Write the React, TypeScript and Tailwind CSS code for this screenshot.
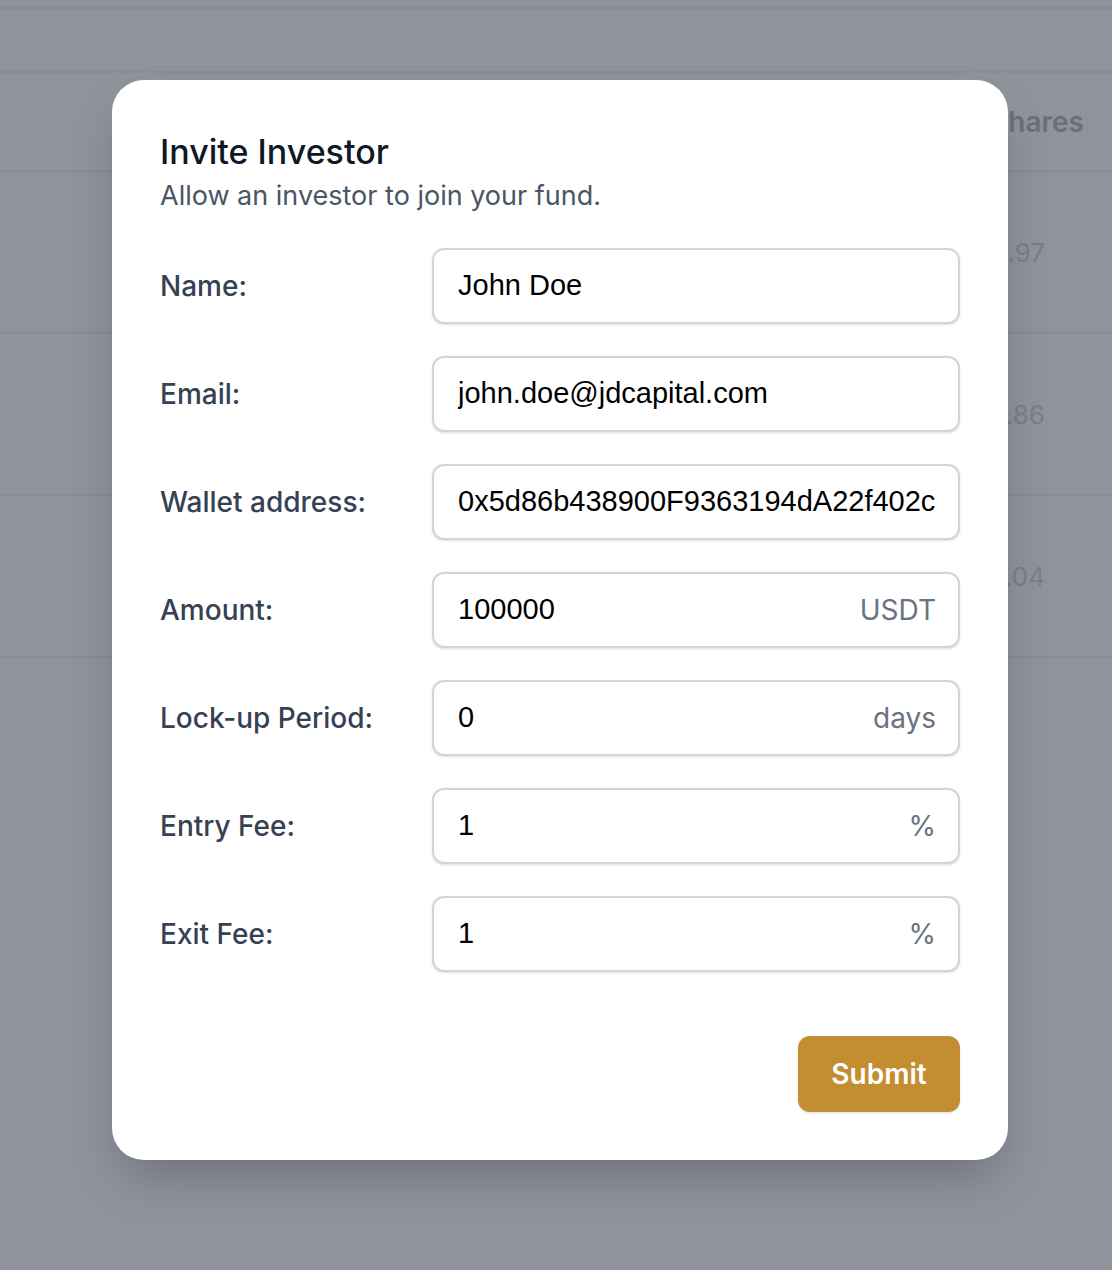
import React from "react";

type Field = {
    label: string;
    value: string;
    suffix?: string;
};

const fields: Field[] = [
    { label: "Name:", value: "John Doe" },
    { label: "Email:", value: "john.doe@jdcapital.com" },
    { label: "Wallet address:", value: "0x5d86b438900F9363194dA22f402c35F2D4b1e7a9" },
    { label: "Amount:", value: "100000", suffix: "USDT" },
    { label: "Lock-up Period:", value: "0", suffix: "days" },
    { label: "Entry Fee:", value: "1", suffix: "%" },
    { label: "Exit Fee:", value: "1", suffix: "%" },
];

const rows = ["1,204.97", "2,418.86", "3,051.04"];

function BackgroundTable() {
    return (
        <div className="w-full">
            <div className="h-[9px] border-b-2 border-[#888c95]"></div>
            <div className="h-[64px] border-b-2 border-[#888c95]"></div>
            <div className="flex h-[99px] items-center justify-end border-b-2 border-[#888c95] pr-[28px]">
                <p className="whitespace-nowrap text-[28px] font-semibold text-[#6b6f79]">
                    Shares
                </p>
            </div>
            {rows.map((value) => (
                <div
                    key={value}
                    className="flex h-[162px] items-center justify-end border-b-2 border-[#888c95] pr-[67px]"
                >
                    <p className="whitespace-nowrap text-[26px] text-[#7a7e88]">
                        {value}
                    </p>
                </div>
            ))}
        </div>
    );
}

function InviteInvestorModal() {
    return (
        <div className="absolute left-[112px] top-[80px] w-[896px] rounded-[32px] bg-white p-12 shadow-2xl">
            <h2 className="text-[34px] font-medium leading-[48px] text-gray-900">
                Invite Investor
            </h2>
            <p className="text-[27px] leading-[40px] text-gray-600">
                Allow an investor to join your fund.
            </p>

            <div className="mt-8 grid grid-cols-3 items-center gap-x-4 gap-y-8">
                {fields.map(({ label, value, suffix }) => (
                    <React.Fragment key={label}>
                        <label className="text-[28px] font-medium text-gray-700">
                            {label}
                        </label>
                        <div className="col-span-2 flex h-[76px] items-center overflow-hidden rounded-[12px] border-2 border-gray-300 bg-white pl-6 pr-[22px] shadow-sm">
                            <input
                                readOnly
                                value={value}
                                className="min-w-0 flex-1 bg-transparent text-[29px] text-black outline-none [font-family:'Liberation_Sans',Arial,sans-serif]"
                            />
                            {suffix !== undefined && (
                                <span className="ml-3 text-[28px] text-gray-500">
                                    {suffix}
                                </span>
                            )}
                        </div>
                    </React.Fragment>
                ))}
            </div>

            <div className="mt-16 flex justify-end">
                <button className="h-[76px] w-[162px] rounded-[12px] bg-[#c38d31] text-[28px] font-semibold text-white shadow-sm">
                    Submit
                </button>
            </div>
        </div>
    );
}

export default function App() {
    return (
        <div className="relative h-[1270px] w-full overflow-hidden bg-[#8f939c] [font-family:Inter,'Noto_Sans',sans-serif]">
            <BackgroundTable />
            <InviteInvestorModal />
        </div>
    );
}
